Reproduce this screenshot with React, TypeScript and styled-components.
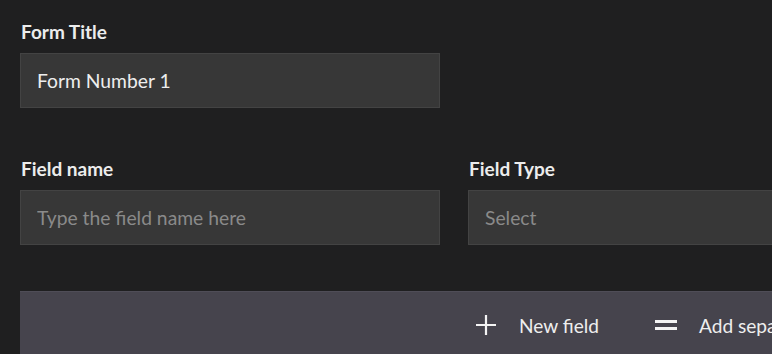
import React from "react";
import styled, { createGlobalStyle } from "styled-components";

const Global = createGlobalStyle`
  html, body {
    margin: 0;
    padding: 0;
    background: #1f1f20;
    overflow: hidden;
  }
  body {
    font-family: Lato, "Open Sans", sans-serif;
  }
`;

const Page = styled.div`
  width: 868px;
  padding: 22px 0 0 20px;
  display: flex;
  flex-direction: column;
`;

const Field = styled.div<{ $width?: number }>`
  display: flex;
  flex-direction: column;
  width: ${(p) => p.$width ?? 420}px;
`;

const Label = styled.label`
  color: #ececec;
  font-size: 19px;
  font-weight: 700;
  line-height: 20px;
  margin: 0 0 11px 1px;
`;

const Input = styled.input`
  box-sizing: border-box;
  height: 55px;
  width: 100%;
  background: #373737;
  border: 1px solid #434343;
  color: #eeeeee;
  font-family: Lato, sans-serif;
  font-size: 19.3px;
  padding: 0 16px;
  outline: none;
  &::placeholder {
    color: #8a8a8a;
  }
`;

const Row = styled.div`
  display: flex;
  gap: 28px;
  margin-top: 51px;
`;

const ActionBar = styled.div`
  margin-top: 46px;
  box-sizing: border-box;
  height: 67px;
  background: #46444d;
  border-top: 1px solid #4f4d57;
  display: flex;
  align-items: center;
  padding-left: 455px;
  gap: 55px;
`;

const Action = styled.button<{ $gap?: number }>`
  display: flex;
  align-items: center;
  gap: ${(p) => p.$gap ?? 22}px;
  background: none;
  border: none;
  padding: 0;
  color: #eeeeee;
  font-family: Lato, sans-serif;
  font-size: 19.1px;
  white-space: nowrap;
  cursor: pointer;
`;

const Icon = styled.svg`
  flex: none;
  display: block;
`;

const PlusIcon = () => (
  <Icon width="22" height="22" viewBox="0 0 22 22">
    <path d="M11 1v20M1 11h20" stroke="#f4f4f4" strokeWidth="2.2" fill="none" />
  </Icon>
);

const EqualsIcon = () => (
  <Icon width="24" height="22" viewBox="0 0 24 22">
    <path d="M1 7.5h22M1 14.5h22" stroke="#f4f4f4" strokeWidth="3" fill="none" />
  </Icon>
);

export default function App() {
  return (
    <>
      <Global />
      <Page>
        <Field>
          <Label>Form Title</Label>
          <Input defaultValue="Form Number 1" />
        </Field>
        <Row>
          <Field>
            <Label>Field name</Label>
            <Input placeholder="Type the field name here" />
          </Field>
          <Field>
            <Label>Field Type</Label>
            <Input placeholder="Select" />
          </Field>
        </Row>
        <ActionBar>
          <Action>
            <PlusIcon />
            New field
          </Action>
          <Action $gap={21}>
            <EqualsIcon />
            Add separator
          </Action>
        </ActionBar>
      </Page>
    </>
  );
}
